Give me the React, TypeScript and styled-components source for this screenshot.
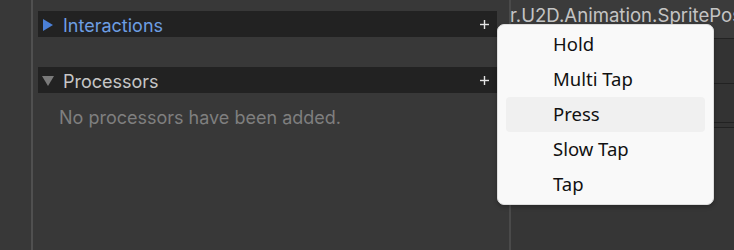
import React from "react";
import styled, { createGlobalStyle } from "styled-components";

const Global = createGlobalStyle`
  html, body { margin: 0; padding: 0; background: #383838; overflow: hidden; }
  #root { width: 734px; height: 250px; }
`;

const Root = styled.div`
  position: relative;
  display: flex;
  width: 734px;
  height: 250px;
  background: #383838;
  font-family: Inter, "Noto Sans", sans-serif;
`;

const Gutter = styled.div`
  width: 31px;
  flex: none;
  border-right: 2px solid #505050;
`;

const Main = styled.div`
  width: 476px;
  flex: none;
  display: flex;
  flex-direction: column;
  padding: 11px 12px 0 5px;
  box-sizing: border-box;
`;

const Header = styled.div<{ $gap?: number }>`
  height: 26px;
  background: #222222;
  display: flex;
  align-items: center;
  padding-left: 4px;
  padding-right: 8px;
  margin-bottom: ${(p) => p.$gap ?? 0}px;
`;

const Title = styled.span<{ $active?: boolean }>`
  flex: 1;
  margin-left: 9px;
  padding-top: 3px;
  font-size: 18px;
  color: ${(p) => (p.$active ? "#6d9ee3" : "#c6c6c6")};
  line-height: 26px;
`;

const Plus = styled.svg`
  width: 9px;
  height: 9px;
  flex: none;
`;

const TriIcon = styled.svg`
  flex: none;
  width: 12px;
  height: 12px;
  margin-top: 1px;
`;

const Empty = styled.div`
  padding: 12px 0 0 21px;
  font-size: 18px;
  color: #7f7f7f;
  line-height: 26px;
`;

const Right = styled.div`
  flex: 1;
  border-left: 2px solid #4a4a4a;
  background: #363636;
  display: flex;
  flex-direction: column;
  overflow: hidden;
`;

const TopRow = styled.div`
  height: 39px;
  background: #3b3b3b;
  border-bottom: 1px solid #232323;
  white-space: nowrap;
  font-size: 18.6px;
  line-height: 26px;
  padding-top: 2px;
  box-sizing: border-box;
  color: #c4c4c4;
  margin-left: -1px;
  overflow: hidden;
`;

const Row = styled.div<{ $h: number }>`
  height: ${(p) => p.$h}px;
  background: #333333;
  border-bottom: 1px solid #222222;
  box-sizing: border-box;
`;

const Menu = styled.div`
  position: absolute;
  left: 497px;
  top: 24px;
  width: 217px;
  height: 181px;
  box-sizing: border-box;
  background: #f9f9f9;
  border: 1px solid #dedede;
  border-radius: 7px;
  box-shadow: 0 2px 4px rgba(0, 0, 0, 0.25);
  padding: 2px 8px 1px 8px;
  display: flex;
  flex-direction: column;
  font-family: "Noto Sans", "Open Sans", sans-serif;
`;

const Item = styled.div<{ $hover?: boolean }>`
  height: 35px;
  flex: none;
  display: flex;
  align-items: center;
  padding-left: 47px;
  padding-bottom: 2px;
  box-sizing: border-box;
  border-radius: 4px;
  font-size: 18.5px;
  color: #111111;
  background: ${(p) => (p.$hover ? "#f0f0f0" : "transparent")};
`;

const Tri = ({ dir, color }: { dir: "right" | "down"; color: string }) => (
  <TriIcon viewBox="0 0 12 12">
    {dir === "right" ? (
      <polygon points="1,0 11,6 1,12" fill={color} />
    ) : (
      <polygon points="0,1 12,1 6,11" fill={color} />
    )}
  </TriIcon>
);

const PlusIcon = () => (
  <Plus viewBox="0 0 9 9">
    <rect x="3.8" y="0" width="1.4" height="9" fill="#e4e4e4" />
    <rect x="0" y="3.8" width="9" height="1.4" fill="#e4e4e4" />
  </Plus>
);

export default function App() {
  const items = ["Hold", "Multi Tap", "Press", "Slow Tap", "Tap"];
  return (
    <>
      <Global />
      <Root>
        <Gutter />
        <Main>
          <Header $gap={30}>
            <Tri dir="right" color="#4b80d8" />
            <Title $active>Interactions</Title>
            <PlusIcon />
          </Header>
          <Header>
            <Tri dir="down" color="#7a7a7a" />
            <Title>Processors</Title>
            <PlusIcon />
          </Header>
          <Empty>No processors have been added.</Empty>
        </Main>
        <Right>
          <TopRow>r.U2D.Animation.SpritePos</TopRow>
          <Row $h={45} />
          <Row $h={39} />
          <Row $h={5} />
        </Right>
        <Menu>
          {items.map((t) => (
            <Item key={t} $hover={t === "Press"}>
              {t}
            </Item>
          ))}
        </Menu>
      </Root>
    </>
  );
}
